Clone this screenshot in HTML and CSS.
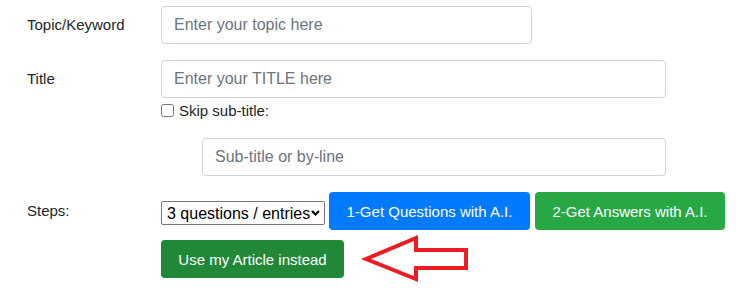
FILE: index.html
```html
<!DOCTYPE html>
<html>
<head>
<meta charset="utf-8">
<link rel="stylesheet" href="styles.css">
</head>
<body>
<form class="form">
  <div class="row">
    <label class="label">Topic/Keyword</label>
    <div class="field">
      <input class="input input-topic" type="text" placeholder="Enter your topic here">
    </div>
  </div>
  <div class="row">
    <label class="label">Title</label>
    <div class="field">
      <input class="input input-title" type="text" placeholder="Enter your TITLE here">
      <div class="check-line">
        <input class="check" type="checkbox" id="skip">
        <label for="skip" class="check-label">Skip sub-title:</label>
      </div>
    </div>
  </div>
  <div class="row">
    <div class="label"></div>
    <div class="field">
      <input class="input input-sub" type="text" placeholder="Sub-title or by-line">
    </div>
  </div>
  <div class="row row-steps">
    <label class="label">Steps:</label>
    <div class="field steps">
      <span class="select-wrap">
        <select class="select">
          <option>3 questions / entries</option>
        </select>
        <svg class="chev" width="9" height="6" viewBox="0 0 9 6"><path d="M1 1 L4.5 4.5 L8 1" fill="none" stroke="#000" stroke-width="2"/></svg>
      </span>
      <button type="button" class="btn btn-blue">1-Get Questions with A.I.</button>
      <button type="button" class="btn btn-green">2-Get Answers with A.I.</button>
    </div>
  </div>
  <div class="row">
    <div class="label"></div>
    <div class="field action">
      <button type="button" class="btn btn-dark">Use my Article instead</button>
      <svg class="arrow" width="110" height="48" viewBox="0 0 110 48">
        <polygon points="4,24 54,3 54,15 104,15 104,33 54,33 54,44" fill="none" stroke="#ed1c24" stroke-width="4" stroke-linejoin="miter"/>
      </svg>
    </div>
  </div>
</form>
</body>
</html>
```

FILE: styles.css
```css
* { box-sizing: border-box; }
body {
  margin: 0;
  background: #fff;
  font-family: "Liberation Sans", Arial, sans-serif;
  font-size: 16px;
  color: #212529;
}
.form {
  padding: 6px 0 0 27px;
}
.row {
  display: grid;
  grid-template-columns: 134px 1fr;
  margin-bottom: 16px;
}
.row-steps { margin-bottom: 10px; }
.label {
  padding-top: 7px;
  line-height: 24px;
  font-size: 15px;
}
.field { display: flex; flex-direction: column; align-items: flex-start; }
.input {
  height: 38px;
  padding: 6px 12px;
  border: 1px solid #ced4da;
  border-radius: 4px;
  font: inherit;
  font-size: 16px;
  color: #495057;
  background: #fff;
}
.input::placeholder { color: #6c757d; }
.input-topic { width: 371px; }
.input-title { width: 505px; }
.input-sub { width: 464px; margin-left: 41px; }
.check-line {
  display: flex;
  align-items: center;
  height: 24px;
  font-size: 15px;
}
.check {
  margin: 0 5px 0 0;
  width: 13px;
  height: 13px;
}
.steps { flex-direction: row; gap: 5px; }
.select-wrap { position: relative; margin-top: 9px; margin-right: -1px; }
.select {
  -webkit-appearance: none;
  appearance: none;
  width: 164px;
  height: 24px;
  padding: 0 0 0 5px;
  border: 1px solid #767676;
  border-radius: 2px;
  background: #fff;
  font: inherit;
  font-size: 16px;
  color: #000;
}
.chev { position: absolute; right: 5px; top: 9px; pointer-events: none; }
.btn {
  height: 38px;
  padding: 0;
  border: 1px solid transparent;
  border-radius: 4px;
  font: inherit;
  font-size: 15px;
  white-space: nowrap;
  text-align: center;
  color: #fff;
}
.btn-blue { background: #007bff; width: 201px; }
.btn-green { background: #28a745; width: 190px; }
.btn-dark { background: #218838; width: 183px; }
.action { flex-direction: row; align-items: flex-start; }
.arrow { margin-left: 18px; margin-top: -5px; }
```
